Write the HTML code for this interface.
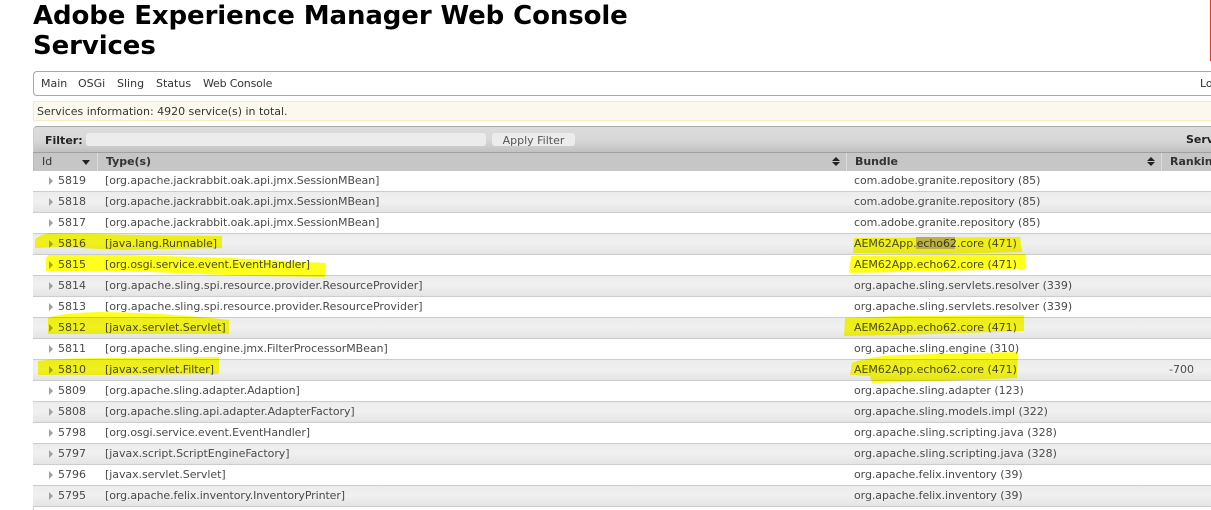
<!DOCTYPE html>
<html><head><meta charset="utf-8"><style>
html,body{margin:0;padding:0;background:#fff;width:1211px;height:510px;overflow:hidden}
body{position:relative;font-family:"DejaVu Sans","Liberation Sans",sans-serif;font-size:11px;color:#444}
.a{position:absolute;white-space:nowrap}
h1{position:absolute;margin:0;left:33px;font:bold 26px/31px "DejaVu Sans",sans-serif;letter-spacing:-.11px;color:#000;white-space:nowrap}
.row{position:absolute;left:33px;width:1178px;height:20px;border-bottom:1px solid #ccc;background:#fff}
.row.g{background:linear-gradient(#ececec,#f0f0f0 50%,#e4e4e4)}
.t{position:absolute;top:3px;line-height:14px;white-space:nowrap;color:#4a4a4a}
.arr{position:absolute;left:16px;top:6px;width:0;height:0;border-left:4px solid #a0a0a0;border-top:4px solid transparent;border-bottom:4px solid transparent}
.id{left:25px}.ty{left:72px}.bu{left:821px}
.th{position:absolute;top:153px;height:18px;line-height:18px;background:#c6c6c6;font-weight:bold;color:#333}
</style></head><body>
<div class="a" style="left:1210px;top:0;width:1px;height:61px;background:#e2401c"></div>
<h1 style="top:1px">Adobe Experience Manager Web Console</h1>
<h1 style="top:31px">Services</h1>

<div class="a" style="left:33px;top:71px;width:1178px;height:23px;border:1px solid #a8a8a8;border-right:0;border-radius:4px 0 0 4px;color:#333">
<span class="a" style="left:7px;top:5px">Main</span><span class="a" style="left:44px;top:5px">OSGi</span><span class="a" style="left:83px;top:5px">Sling</span><span class="a" style="left:122px;top:5px">Status</span><span class="a" style="left:169px;top:5px;letter-spacing:-.18px">Web Console</span><span class="a" style="left:1166px;top:5px">Lo</span></div>

<div class="a" style="left:33px;top:101px;width:1178px;height:18px;background:#fbf9ee;border:1px solid #f5ecc0;border-right:0;color:#363636;line-height:20px"><span style="margin-left:3px;letter-spacing:-.02px">Services information: 4920 service(s) in total.</span></div>

<div class="a" style="left:33px;top:126px;width:1178px;height:26px;border-top:1px solid #aaa;border-left:1px solid #ccc;box-sizing:border-box;border-radius:4px 0 0 0;background:linear-gradient(#dcdcdc,#d8d8d8 50%,#c2c2c2)"></div>
<div class="a" style="left:45px;top:134px;font-weight:bold;color:#222">Filter:</div>
<div class="a" style="left:86px;top:133px;width:400px;height:13px;background:#ececec;border-radius:3px"></div>
<div class="a" style="left:492px;top:133px;width:83px;height:13px;background:#ececec;border-radius:3px;text-align:center;line-height:16px;color:#555">Apply Filter</div>
<div class="a" style="left:1186px;top:133px;font-weight:bold;color:#222">Serv</div>
<div class="a" style="left:33px;top:152px;width:1178px;height:1px;background:#a0a0a0"></div>

<div class="th" style="left:33px;width:1178px"></div>
<div class="a" style="left:33px;top:153px;width:1px;height:18px;background:#bbb"></div>
<div class="a" style="left:97px;top:153px;width:1px;height:18px;background:#dcdcdc"></div>
<div class="a" style="left:846px;top:153px;width:1px;height:18px;background:#dcdcdc"></div>
<div class="a" style="left:1161px;top:153px;width:1px;height:18px;background:#dcdcdc"></div>
<div class="a" style="left:42px;top:155px;color:#333;line-height:14px">Id</div>
<div class="a" style="left:106px;top:155px;font-weight:bold;color:#333;line-height:14px;letter-spacing:-.05px">Type(s)</div>
<div class="a" style="left:855px;top:155px;font-weight:bold;color:#333;line-height:14px;letter-spacing:-.05px">Bundle</div>
<div class="a" style="left:1170px;top:155px;font-weight:bold;color:#333;line-height:14px">Rankin</div>
<div class="a" style="left:82px;top:160px;border-top:5px solid #222;border-left:4px solid transparent;border-right:4px solid transparent"></div>
<div class="a" style="left:832px;top:157px;border-bottom:4px solid #222;border-left:4px solid transparent;border-right:4px solid transparent"></div>
<div class="a" style="left:832px;top:162px;border-top:4px solid #222;border-left:4px solid transparent;border-right:4px solid transparent"></div>
<div class="a" style="left:1147px;top:157px;border-bottom:4px solid #222;border-left:4px solid transparent;border-right:4px solid transparent"></div>
<div class="a" style="left:1147px;top:162px;border-top:4px solid #222;border-left:4px solid transparent;border-right:4px solid transparent"></div>

<div class="a" style="left:33px;top:171px;width:1px;height:339px;background:#ccc"></div>

<div class="row" style="top:171px"><i class="arr"></i><span class="t id">5819</span><span class="t ty" style="letter-spacing:-.1px">[org.apache.jackrabbit.oak.api.jmx.SessionMBean]</span><span class="t bu" style="letter-spacing:-.09px">com.adobe.granite.repository (85)</span></div>
<div class="row g" style="top:192px"><i class="arr"></i><span class="t id">5818</span><span class="t ty" style="letter-spacing:-.1px">[org.apache.jackrabbit.oak.api.jmx.SessionMBean]</span><span class="t bu" style="letter-spacing:-.09px">com.adobe.granite.repository (85)</span></div>
<div class="row" style="top:213px"><i class="arr"></i><span class="t id">5817</span><span class="t ty" style="letter-spacing:-.1px">[org.apache.jackrabbit.oak.api.jmx.SessionMBean]</span><span class="t bu" style="letter-spacing:-.09px">com.adobe.granite.repository (85)</span></div>
<div class="row g" style="top:234px"><i class="arr"></i><span class="t id">5816</span><span class="t ty" style="letter-spacing:-.1px">[java.lang.Runnable]</span><span class="t bu" style="letter-spacing:-.04px">AEM62App.echo62.core (471)</span></div>
<div class="row" style="top:255px"><i class="arr"></i><span class="t id">5815</span><span class="t ty" style="letter-spacing:-.1px">[org.osgi.service.event.EventHandler]</span><span class="t bu" style="letter-spacing:-.04px">AEM62App.echo62.core (471)</span></div>
<div class="row g" style="top:276px"><i class="arr"></i><span class="t id">5814</span><span class="t ty">[org.apache.sling.spi.resource.provider.ResourceProvider]</span><span class="t bu" style="letter-spacing:-.02px">org.apache.sling.servlets.resolver (339)</span></div>
<div class="row" style="top:297px"><i class="arr"></i><span class="t id">5813</span><span class="t ty">[org.apache.sling.spi.resource.provider.ResourceProvider]</span><span class="t bu" style="letter-spacing:-.02px">org.apache.sling.servlets.resolver (339)</span></div>
<div class="row g" style="top:318px"><i class="arr"></i><span class="t id">5812</span><span class="t ty" style="letter-spacing:-.05px">[javax.servlet.Servlet]</span><span class="t bu" style="letter-spacing:-.04px">AEM62App.echo62.core (471)</span></div>
<div class="row" style="top:339px"><i class="arr"></i><span class="t id">5811</span><span class="t ty" style="letter-spacing:-.06px">[org.apache.sling.engine.jmx.FilterProcessorMBean]</span><span class="t bu">org.apache.sling.engine (310)</span></div>
<div class="row g" style="top:360px"><i class="arr"></i><span class="t id">5810</span><span class="t ty" style="letter-spacing:-.05px">[javax.servlet.Filter]</span><span class="t bu" style="letter-spacing:-.04px">AEM62App.echo62.core (471)</span><span class="t" style="left:1136px">-700</span></div>
<div class="row" style="top:381px"><i class="arr"></i><span class="t id">5809</span><span class="t ty" style="letter-spacing:-.09px">[org.apache.sling.adapter.Adaption]</span><span class="t bu" style="letter-spacing:-.03px">org.apache.sling.adapter (123)</span></div>
<div class="row g" style="top:402px"><i class="arr"></i><span class="t id">5808</span><span class="t ty" style="letter-spacing:-.07px">[org.apache.sling.api.adapter.AdapterFactory]</span><span class="t bu" style="letter-spacing:-.03px">org.apache.sling.models.impl (322)</span></div>
<div class="row" style="top:423px"><i class="arr"></i><span class="t id">5798</span><span class="t ty" style="letter-spacing:-.1px">[org.osgi.service.event.EventHandler]</span><span class="t bu" style="letter-spacing:.03px">org.apache.sling.scripting.java (328)</span></div>
<div class="row g" style="top:444px"><i class="arr"></i><span class="t id">5797</span><span class="t ty" style="letter-spacing:-.03px">[javax.script.ScriptEngineFactory]</span><span class="t bu" style="letter-spacing:.03px">org.apache.sling.scripting.java (328)</span></div>
<div class="row" style="top:465px"><i class="arr"></i><span class="t id">5796</span><span class="t ty" style="letter-spacing:-.05px">[javax.servlet.Servlet]</span><span class="t bu" style="letter-spacing:-.06px">org.apache.felix.inventory (39)</span></div>
<div class="row g" style="top:486px"><i class="arr"></i><span class="t id">5795</span><span class="t ty" style="letter-spacing:-.09px">[org.apache.felix.inventory.InventoryPrinter]</span><span class="t bu" style="letter-spacing:-.06px">org.apache.felix.inventory (39)</span></div>

<svg class="a" style="left:0;top:0;mix-blend-mode:multiply" width="1211" height="510" viewBox="0 0 1211 510">
<g fill="#ffff1e">
<path d="M35 240Q38 235 50 233L140 235L222 236L222 248L120 250L60 247L35 248Z"/>
<path d="M46 258L48 255L130 255L230 258L325 263L325 277L250 276L150 272L46 271Z"/>
<path d="M48 318Q60 313 100 312Q170 313 229 320L229 334L120 334L48 334Z"/>
<path d="M38 361Q60 358 110 358L219 357L219 374L100 375L38 375Z"/>
<path d="M854 238L1020 237L1022 252L940 254L853 253Z"/>
<path d="M851 256L1025 254L1025 269L900 272L849 273Z"/>
<path d="M845 318L900 316L1024 315L1024 331L900 335L844 336Z"/>
<path d="M852 363Q870 356 900 355L1018 352L1017 378L940 381L872 383L870 376L850 375Z"/>
</g>
<rect x="916" y="237" width="39" height="12" fill="#c9bd4a"/>
</svg>
</body></html>
